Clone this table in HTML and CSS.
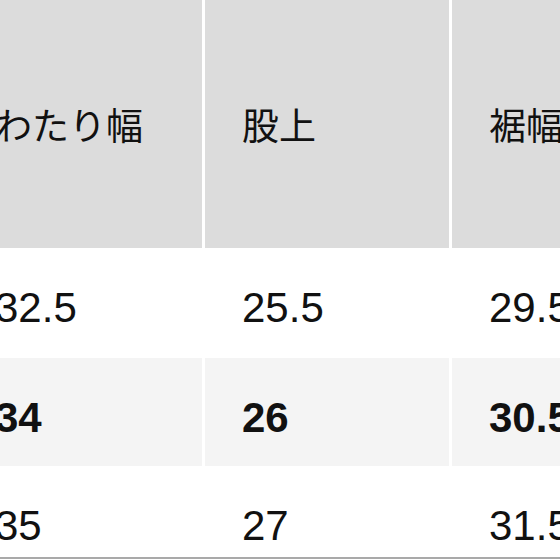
FILE: index.html
```html
<!DOCTYPE html>
<html lang="ja">
<head>
<meta charset="utf-8">
<link rel="stylesheet" href="styles.css">
</head>
<body>
<div class="viewport">
  <div class="table">
    <div class="row head">
      <div class="cell">わたり幅</div>
      <div class="cell">股上</div>
      <div class="cell">裾幅</div>
    </div>
    <div class="row data r1">
      <div class="cell">32.5</div>
      <div class="cell">25.5</div>
      <div class="cell">29.5</div>
    </div>
    <div class="row data r2 strong">
      <div class="cell">34</div>
      <div class="cell">26</div>
      <div class="cell">30.5</div>
    </div>
    <div class="row data r3">
      <div class="cell">35</div>
      <div class="cell">27</div>
      <div class="cell">31.5</div>
    </div>
  </div>
  <div class="rule"></div>
</div>
</body>
</html>
```
FILE: styles.css
```css
html, body {
  margin: 0;
  padding: 0;
  background: #ffffff;
}
.viewport {
  width: 560px;
  height: 560px;
  overflow: hidden;
  position: relative;
}
.table {
  margin-left: -42px;
  width: 740px;
  display: flex;
  flex-direction: column;
}
.row {
  display: grid;
  grid-template-columns: 244px 244px 244px;
  column-gap: 3px;
}
.cell {
  padding-left: 37px;
  color: #111111;
  white-space: nowrap;
}
.head .cell {
  height: 248px;
  background: #dcdcdc;
  display: flex;
  align-items: center;
  font-family: "Noto Sans CJK JP", "Noto Sans", sans-serif;
  font-size: 37px;
  font-weight: 400;
}
.data .cell {
  font-family: "Liberation Sans", Arial, sans-serif;
  font-size: 42px;
  line-height: 42px;
  padding-top: 39px;
  box-sizing: border-box;
}
.r1 .cell { height: 110px; }
.r2 .cell { height: 108px; background: #f4f4f4; }
.r3 .cell { height: 91px; }
.strong .cell { font-weight: 700; }
.rule {
  height: 2px;
  background: #a9a9a9;
}
```
